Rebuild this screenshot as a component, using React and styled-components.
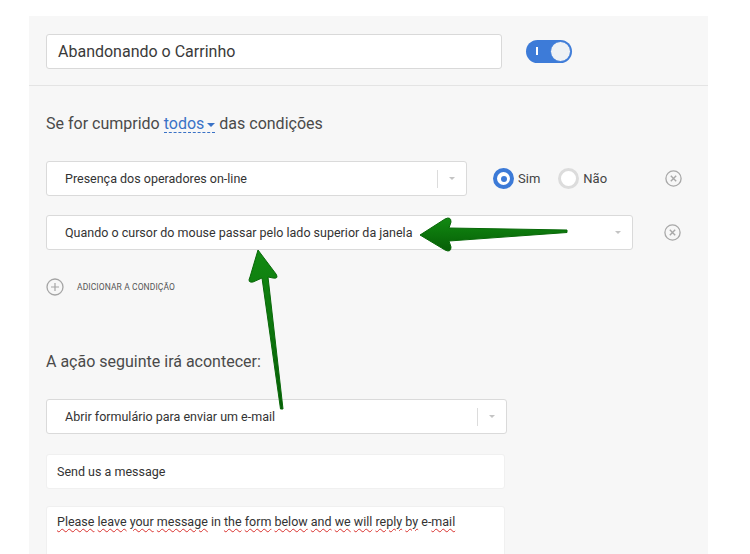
import React from 'react';
import styled, { createGlobalStyle } from 'styled-components';

const GlobalStyle = createGlobalStyle`
  html, body {
    margin: 0;
    padding: 0;
    background: #fff;
    font-family: Roboto, "Liberation Sans", Arial, sans-serif;
    color: #333;
  }
`;

const Page = styled.div`
  position: relative;
  width: 750px;
  height: 554px;
  overflow: hidden;
  padding: 16px 0 0 29px;
  box-sizing: border-box;
`;

const Panel = styled.div`
  width: 679px;
  height: 600px;
  background: #f7f7f7;
`;

const Header = styled.div`
  display: flex;
  align-items: center;
  padding: 18px 17px 16px;
  border-bottom: 1px solid #e4e4e4;
`;

const NameInput = styled.div`
  width: 456px;
  height: 35px;
  box-sizing: border-box;
  border: 1px solid #d9d9d9;
  border-radius: 3px;
  background: #fff;
  display: flex;
  align-items: center;
  padding-left: 11px;
  font-size: 16px;
  color: #3a3a3a;
`;

const Toggle = styled.div`
  position: relative;
  margin-left: 24px;
  width: 46px;
  height: 23px;
  border-radius: 12px;
  background: #3d7bd8;
  box-sizing: border-box;

  &::before {
    content: '';
    position: absolute;
    left: 10px;
    top: 7px;
    width: 1.5px;
    height: 8px;
    background: #fff;
  }

  &::after {
    content: '';
    position: absolute;
    right: 1px;
    top: 1px;
    width: 21px;
    height: 21px;
    border-radius: 50%;
    background: #eef1f5;
    box-sizing: border-box;
    border: 1px solid #3d7bd8;
  }
`;

const Body = styled.div`
  padding: 28px 17px 0;
  display: flex;
  flex-direction: column;
`;

const Title = styled.div`
  font-size: 16px;
  line-height: 20px;
  color: #4a4a4a;
  display: flex;
  align-items: center;
  gap: 4px;
  margin-bottom: ${p => p.$mb || 27}px;
`;

const Dropdown = styled.span`
  color: #3a72c6;
  border-bottom: 1px dashed #3a72c6;
  line-height: 17px;
  display: inline-flex;
  align-items: center;
  gap: 3px;

  &::after {
    content: '';
    border-left: 4px solid transparent;
    border-right: 4px solid transparent;
    border-top: 4px solid #3a72c6;
    margin-top: 2px;
  }
`;

const Row = styled.div`
  display: flex;
  align-items: center;
  margin-bottom: ${p => p.$mb || 0}px;
`;

const Select = styled.div`
  width: ${p => p.$w}px;
  height: 35px;
  box-sizing: border-box;
  border: 1px solid #dadada;
  border-radius: 3px;
  background: #fff;
  display: flex;
  align-items: center;
  padding-left: 18px;
  font-size: 12.5px;
  color: #333;
  flex-shrink: 0;
`;

const SelectText = styled.span`
  flex: 1;
`;

const Divider = styled.span`
  width: 1px;
  height: 18px;
  background: #dcdcdc;
`;

const Caret = styled.span`
  width: 28px;
  display: flex;
  justify-content: center;

  &::after {
    content: '';
    border-left: 3.5px solid transparent;
    border-right: 3.5px solid transparent;
    border-top: 3.5px solid #c4c4c4;
  }
`;

const Radios = styled.div`
  display: flex;
  align-items: center;
  margin-left: 26px;
  gap: 18px;
`;

const Radio = styled.label`
  display: flex;
  align-items: center;
  gap: 4px;
  font-size: 13px;
  color: #444;
`;

const RadioDot = styled.span`
  width: 21px;
  height: 21px;
  border-radius: 50%;
  box-sizing: border-box;
  background: #fff;
  border: ${p => (p.$on ? '4px solid #3c7ad7' : '3px solid #dcdcdc')};
  display: flex;
  align-items: center;
  justify-content: center;

  &::after {
    content: '';
    display: ${p => (p.$on ? 'block' : 'none')};
    width: 6px;
    height: 6px;
    border-radius: 50%;
    background: #3c7ad7;
  }
`;

const RemoveButton = styled.span`
  margin-left: ${p => p.$ml}px;
  width: 17px;
  height: 17px;
  display: flex;
  color: #a8a8a8;
`;

const AddRow = styled.div`
  display: flex;
  align-items: center;
  gap: 13px;
  margin-top: 28px;
  margin-bottom: 56px;
  font-size: 8.5px;
  color: #555;
  text-transform: uppercase;
  letter-spacing: 0.1px;
`;

const AddIcon = styled.span`
  width: 18px;
  height: 18px;
  display: flex;
  color: #a5a5a5;
`;

const TextField = styled.div`
  width: 459px;
  height: ${p => p.$h || 35}px;
  box-sizing: border-box;
  border: 1px solid #f0f0f0;
  border-radius: 3px;
  background: #fff;
  font-size: 12.5px;
  color: #333;
  padding: ${p => (p.$area ? '7px 10px' : '0 10px')};
  display: flex;
  align-items: ${p => (p.$area ? 'flex-start' : 'center')};
  margin-bottom: ${p => p.$mb || 0}px;
`;

const Typo = styled.span`
  text-decoration: underline wavy #d9302c;
  text-decoration-thickness: 1px;
  text-underline-offset: 2px;
`;

const Overlay = styled.svg`
  position: absolute;
  left: 0;
  top: 0;
  pointer-events: none;
`;

const CloseCircle = () => (
  <svg width="17" height="17" viewBox="0 0 17 17" fill="none" stroke="currentColor">
    <circle cx="8.5" cy="8.5" r="7.6" strokeWidth="1.3" />
    <path d="M5.8 5.8 L11.2 11.2 M11.2 5.8 L5.8 11.2" strokeWidth="1.4" />
  </svg>
);

const PlusCircle = () => (
  <svg width="18" height="18" viewBox="0 0 18 18" fill="none" stroke="currentColor">
    <circle cx="9" cy="9" r="8" strokeWidth="1.3" />
    <path d="M9 5 V13 M5 9 H13" strokeWidth="1.2" />
  </svg>
);

const message = [
  ['Please', true], [' '], ['leave', true], [' '], ['your', true], [' '], ['message', true],
  [' in '], ['the', true], [' '], ['form', true], [' '], ['below', true], [' '], ['and', true],
  [' '], ['we', true], [' '], ['will', true], [' '], ['reply', true], [' '], ['by', true],
  [' e-'], ['mail', true],
];

const App = () => {
  return (
    <Page>
      <GlobalStyle />
      <Panel>
        <Header>
          <NameInput>Abandonando o Carrinho</NameInput>
          <Toggle />
        </Header>
        <Body>
          <Title>
            Se for cumprido <Dropdown>todos</Dropdown> das condições
          </Title>

          <Row $mb={19}>
            <Select $w={421}>
              <SelectText>Presença dos operadores on-line</SelectText>
              <Divider />
              <Caret />
            </Select>
            <Radios>
              <Radio><RadioDot $on />Sim</Radio>
              <Radio><RadioDot />Não</Radio>
            </Radios>
            <RemoveButton $ml={58}><CloseCircle /></RemoveButton>
          </Row>

          <Row>
            <Select $w={587}>
              <SelectText>Quando o cursor do mouse passar pelo lado superior da janela</SelectText>
              <Caret />
            </Select>
            <RemoveButton $ml={31}><CloseCircle /></RemoveButton>
          </Row>

          <AddRow>
            <AddIcon><PlusCircle /></AddIcon>
            Adicionar a condição
          </AddRow>

          <Title $mb={27}>A ação seguinte irá acontecer:</Title>

          <Row $mb={20}>
            <Select $w={461}>
              <SelectText>Abrir formulário para enviar um e-mail</SelectText>
              <Divider />
              <Caret />
            </Select>
          </Row>

          <TextField $mb={17}>Send us a message</TextField>
          <TextField $area $h={80}>
            <span>
              {message.map(([w, typo], i) => (typo ? <Typo key={i}>{w}</Typo> : <span key={i}>{w}</span>))}
            </span>
          </TextField>
        </Body>
      </Panel>

      <Overlay width="750" height="554" viewBox="0 0 750 554">
        <defs>
          <linearGradient id="arrowGrad" x1="0" y1="0" x2="0" y2="1">
            <stop offset="0" stopColor="#128a12" />
            <stop offset="1" stopColor="#065e06" />
          </linearGradient>
        </defs>
        <path
          d="M420 235 L445 219 Q451 216 451 222 L449 228 L567 230 L567 232.5 L449 241 L451 247 Q451 253 445 250 Z"
          fill="url(#arrowGrad)"
          stroke="#086808"
          strokeWidth="1"
          strokeLinejoin="round"
        />
        <path
          d="M258 250 L276 274 Q279 279 273 278 L268 277 L283 409 L280.5 409 L262 278 L253 282 Q247 283 250 277 Z"
          fill="url(#arrowGrad)"
          stroke="#086808"
          strokeWidth="1"
          strokeLinejoin="round"
        />
      </Overlay>
    </Page>
  );
};

export default App;
